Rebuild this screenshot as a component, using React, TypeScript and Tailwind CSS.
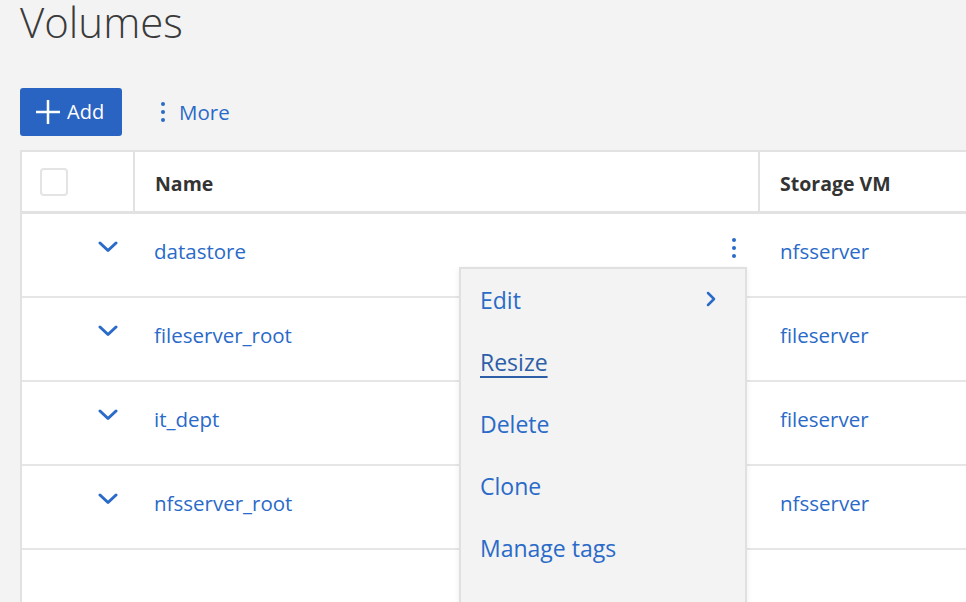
import React from 'react';

const rows = [
  { name: 'datastore', svm: 'nfsserver' },
  { name: 'fileserver_root', svm: 'fileserver' },
  { name: 'it_dept', svm: 'fileserver' },
  { name: 'nfsserver_root', svm: 'nfsserver' },
];

const menuItems = ['Edit', 'Resize', 'Delete', 'Clone', 'Manage tags'];

const Chevron = () => (
  <svg width="20" height="12" viewBox="0 0 20 12" fill="none">
    <path d="M2 2l8 7.5L18 2" stroke="#2a6ac8" strokeWidth="3" strokeLinecap="round" strokeLinejoin="round" />
  </svg>
);

const Kebab = ({ className = '' }: { className?: string }) => (
  <div className={`flex flex-col items-center gap-[4px] ${className}`}>
    <span className="block w-[4px] h-[4px] rounded-full bg-[#2a6ac8]" />
    <span className="block w-[4px] h-[4px] rounded-full bg-[#2a6ac8]" />
    <span className="block w-[4px] h-[4px] rounded-full bg-[#2a6ac8]" />
  </div>
);

export default function App() {
  return (
    <div className="w-[966px] h-[602px] overflow-hidden bg-[#f3f3f3] font-['Open_Sans',sans-serif] relative">
      <div className="pl-5">
        <h1 className="text-[42px] leading-[44px] font-light text-[#3a3a3a]">Volumes</h1>

        <div className="mt-[44px] flex items-center h-[48px]">
          <button className="w-[102px] h-[48px] rounded-[3px] bg-[#2a64c3] text-white flex items-center pl-[15px] gap-[6px]">
            <svg width="26" height="26" viewBox="0 0 26 26">
              <path d="M13 1v24M1 13h24" stroke="white" strokeWidth="2.5" />
            </svg>
            <span className="text-[20px] leading-none">Add</span>
          </button>
          <div className="ml-[39px] flex items-center gap-[14px] text-[#2a6ac8]">
            <Kebab />
            <span className="text-[20.5px] leading-none">More</span>
          </div>
        </div>

        <div className="mt-[14px] w-[1000px] bg-white border-l-2 border-t-2 border-[#e2e2e2]">
          <div className="grid grid-cols-[113px_625px_1fr] h-[62px] border-b-[3px] border-[#e2e2e2]">
            <div className="flex items-center pl-[18px] border-r-2 border-[#e2e2e2]">
              <div className="w-[28px] h-[28px] rounded-[4px] border-2 border-[#e4e4e4] bg-white" />
            </div>
            <div className="flex items-center pt-[5px] pl-[20px] border-r-2 border-[#e2e2e2] text-[19.5px] font-bold text-[#333]">Name</div>
            <div className="flex items-center pt-[5px] pl-[20px] text-[19.5px] font-bold text-[#333]">Storage VM</div>
          </div>
          {rows.map((r, i) => (
            <div key={r.name} className="grid grid-cols-[113px_625px_1fr] h-[84px] border-b-2 border-[#e6e6e6] text-[20.5px] text-[#2a6ac8]">
              <div className="flex justify-end pr-[17px] pt-[27px]">
                <Chevron />
              </div>
              <div className="pl-[19px] pt-[22px] flex justify-between pr-[24px]">
                <span>{r.name}</span>
                {i === 0 && <Kebab className="mt-[2px]" />}
              </div>
              <div className="pl-[20px] pt-[22px]">{r.svm}</div>
            </div>
          ))}
          <div className="h-[60px]" />
        </div>
      </div>

      <div className="absolute left-[459px] top-[267px] w-[288px] h-[360px] bg-[#f3f3f3] border-2 border-[#e0e0e0] shadow-[0_2px_6px_rgba(0,0,0,0.08)] pt-[14px] pl-[19px] pr-[28px] text-[23px] text-[#2a6ac8]">
        {menuItems.map((m, i) => (
          <div key={m} className="h-[62px] flex items-start justify-between">
            <span className={i === 1 ? 'underline underline-offset-[5px] decoration-[1.5px] text-[#2d5ea8]' : ''}>{m}</span>
            {i === 0 && (
              <svg width="12" height="16" viewBox="0 0 12 16" className="mt-[8px]">
                <path d="M3 2l6 6-6 6" stroke="#2a6ac8" strokeWidth="2.5" fill="none" strokeLinecap="round" strokeLinejoin="round" />
              </svg>
            )}
          </div>
        ))}
      </div>
    </div>
  );
}
